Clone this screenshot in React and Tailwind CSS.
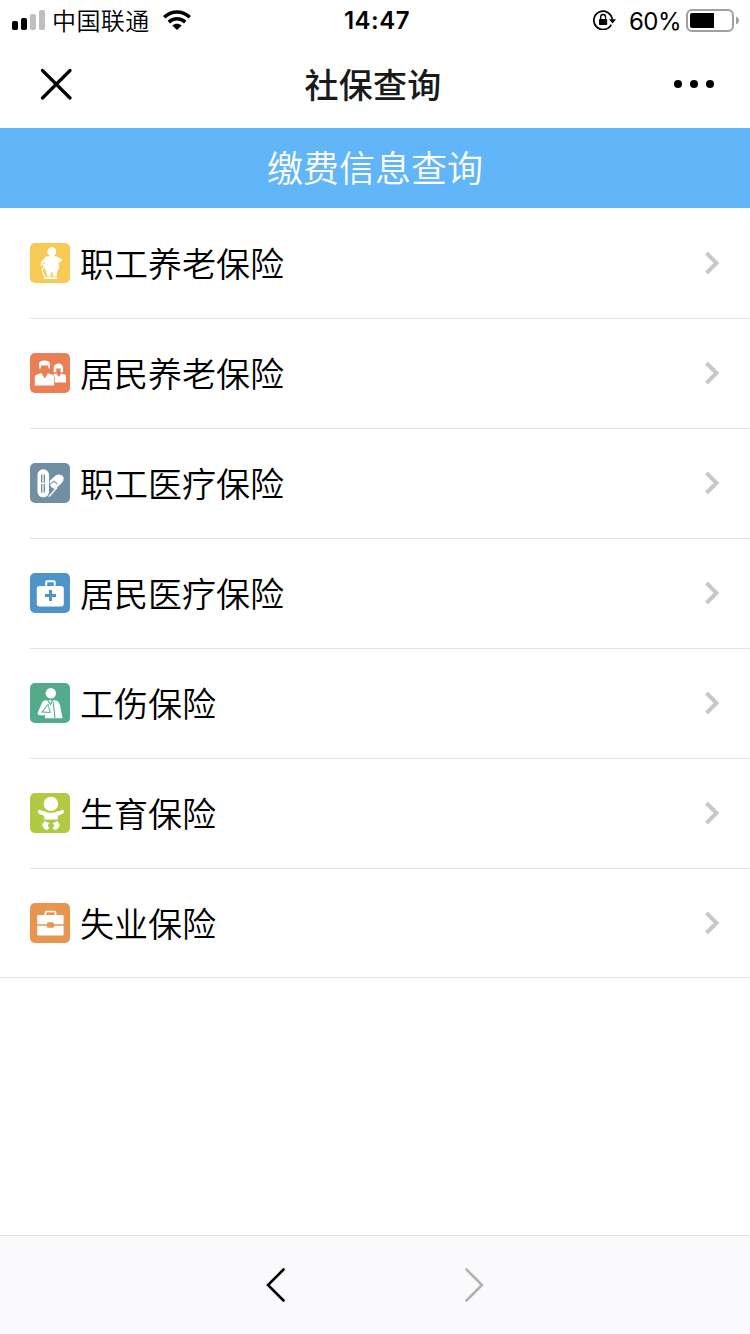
const insurances = [
  { name: "职工养老保险", color: "bg-[#f6ca54]", icon: ElderIcon },
  { name: "居民养老保险", color: "bg-[#ea7e55]", icon: CoupleIcon },
  { name: "职工医疗保险", color: "bg-[#718fa3]", icon: PillsIcon },
  { name: "居民医疗保险", color: "bg-[#4e94cb]", icon: MedkitIcon },
  { name: "工伤保险", color: "bg-[#54ab8b]", icon: InjuryIcon },
  { name: "生育保险", color: "bg-[#b1ca44]", icon: BabyIcon },
  { name: "失业保险", color: "bg-[#e8954f]", icon: BriefcaseIcon }
];

function ElderIcon() {
  return (
    <svg viewBox="0 0 40 40" className="size-10" fill="#fff">
      <circle cx="21.8" cy="8.7" r="4.5" />
      <path d="M15.3 14c3-1.400 9.500-1.400 12.500 0l3.800 2.100c.8.400.8 1.600 0 2L28.600 20c1 3.200.4 6.500-1.500 8.600l-.4 4.900h-3.900v-4h-2v4h-4l-.3-4.900c-2.300-2.300-2.900-6.500-1.800-10.200l-2.700 2.900-1.500-1.500z" />
      <path d="M10.800 22.800c.5-2.100 3.800-2 3.500.3l-2.200 4.300 3.100 7.600" fill="none" stroke="#fff" strokeWidth="1.200" />
      <path d="M14 35.200h13.300" stroke="#fff" strokeWidth="1.700" />
    </svg>
  );
}

function CoupleIcon() {
  return (
    <svg viewBox="0 0 40 40" className="size-10" fill="#fff">
      <path d="M9 15.500V11c0-2.200 2-3.500 5.300-3.500S20 8.800 20 11.200v4.300h-1.400l-.4-3h-6.900l-.6 3z" />
      <path d="M4.800 32.400V24c0-1.200 1-2 2.300-2.400l4.200-1.500 3.400 5.400 3.200-5.300 4 1.500c1.800.700 2.300 1.500 2.300 3.300v7.400z" />
      <path d="M23.700 19.200v-4.400c0-2.600 2-4.300 4.700-4.300s4.700 1.700 4.700 4.300v4.400h-2.600v-3.600h-4.200v3.600z" />
      <path d="M22.500 21.600l3.900-1.200 2.400 3.700 2.500-3.700 3.100 1.200c1.200.4 1.600 1 1.600 2.400v5.400H24.800V25c0-1.500-.8-2.700-2.300-3.400z" />
    </svg>
  );
}

function PillsIcon() {
  return (
    <svg viewBox="0 0 40 40" className="size-10">
      <rect x="7.500" y="6.300" width="11.500" height="28" rx="5.500" fill="#fff" />
      <rect x="11" y="11" width="4" height="19" rx="1.600" fill="#718fa3" />
      <path d="M13 11v19M10.800 20.300h4.400" stroke="#fff" strokeWidth="1.300" />
      <path d="M20.200 17.300l5.500-4.800c2.500-2 6.600-.9 7.700 1.700.7 1.800.2 3.800-1.300 5.300l-5.600 5.400c-1.200 1.200-2.700 1-3.700.4-2.500-1.500-3.800-5.800-2.600-8z" fill="#fff" />
      <path d="M20.300 21.200l3.600-3 3.400 3" fill="none" stroke="#718fa3" strokeWidth="1.100" />
      <path d="M18.800 33.700L27 24.500" stroke="#fff" strokeWidth="1.300" />
    </svg>
  );
}

function MedkitIcon() {
  return (
    <svg viewBox="0 0 40 40" className="size-10">
      <rect x="6.800" y="13" width="27" height="20.500" rx="2.700" fill="#fff" />
      <path d="M16.200 12.800V9.200c0-.7.4-1 1-1h6.500c.7 0 1 .3 1 1v3.600" fill="none" stroke="#fff" strokeWidth="2" />
      <path d="M20.500 16.900v11M15 22.400h11" stroke="#4e94cb" strokeWidth="3" />
    </svg>
  );
}

function InjuryIcon() {
  return (
    <svg viewBox="0 0 40 40" className="size-10">
      <circle cx="20.800" cy="10.200" r="5.200" fill="#fff" />
      <path d="M15.500 17.200h9c3.800 0 5.200 2.900 5.900 7.100l2.200 10.900H15v-3H9.800c-2.100-.1-2.700-1.900-1.600-3.600l3.500-8c.7-2 1.600-3 3.800-3.400z" fill="#fff" />
      <path d="M18.300 20.500l-7.300 9 9.800.5z" fill="#54ab8b" />
      <path d="M18 22.200l-4.900 6.300 6.300.4z" fill="#fff" />
      <path d="M17.500 16.800l3.100 4.700 2-4.700M23.200 18.700l1.800 16.500" fill="none" stroke="#54ab8b" strokeWidth="1.100" />
    </svg>
  );
}

function BabyIcon() {
  return (
    <svg viewBox="0 0 40 40" className="size-10" fill="#fff">
      <circle cx="20.900" cy="10.900" r="7.200" />
      <path d="M8.200 17.600c1-1.200 2.700-.9 3.600.4l2.900.2c3.900 2 8.900 2 12.700 0l2.900-.2c.8-1.300 2.500-1.600 3.300-.4.900 1.300-.2 2.900-1.300 3.500l-4.400 1.700-.3 3.700H14.400l-.3-3.700-4.700-1.700c-1.200-.4-2-2.400-1.200-3.500z" />
      <path d="M14.600 28l4.700 2.300-1.800 2.200 1.100 1.300c1.200 1.500-.5 3.500-2.400 2.900l-2-.9-2.200-4z" />
      <path d="M27.400 28l-4.700 2.300 1.800 2.200-1.100 1.300c-1.200 1.500.5 3.500 2.400 2.900l2-.9 2.200-4z" />
    </svg>
  );
}

function BriefcaseIcon() {
  return (
    <svg viewBox="0 0 40 40" className="size-10">
      <path d="M15.500 13V9.700c0-.8.400-1.200 1.200-1.200h7.600c.8 0 1.200.4 1.200 1.200V13" fill="none" stroke="#fff" strokeWidth="1.700" />
      <rect x="7.200" y="12" width="26.400" height="20.500" rx="1.300" fill="#fff" />
      <path d="M7 22h27" stroke="#e8954f" strokeWidth="1.600" />
      <rect x="16.900" y="19.200" width="7.200" height="5.500" rx="1.500" fill="#e8954f" />
    </svg>
  );
}

function StatusBar() {
  return (
    <div className="grid h-10 grid-cols-[1fr_auto_1fr] items-center pr-[11px] pl-3 text-black">
      <div className="flex items-center">
        <svg viewBox="0 0 33 20" className="h-5 w-[33px]">
          <rect y="11" width="6" height="9" rx="1.800" />
          <rect x="9" y="8" width="6" height="12" rx="1.800" />
          <rect x="18" y="4" width="6" height="16" rx="1.800" fill="#bfbfbf" />
          <rect x="27" width="6" height="20" rx="1.800" fill="#bfbfbf" />
        </svg>
        <span className="ml-[7px] text-[24px] leading-10 font-[350] tracking-[0.4px]">中国联通</span>
        <svg viewBox="0 0 28 20" className="ml-[13px] h-5 w-7 shrink-0" fill="none" stroke="#000" strokeWidth="3.500">
          <path d="M1.200 7.300C8.600.2 19.400.2 26.800 7.300" />
          <path d="M5.800 12.100c4.800-4.400 11.600-4.400 16.400 0" />
          <path d="M9.300 15.500c2.800-2.400 6.600-2.400 9.400 0L14 20z" fill="#000" stroke="none" />
        </svg>
      </div>
      <span className="pt-0.5 pl-[3px] font-[Inter] text-[24px] font-semibold tracking-[0.500px]">14:47</span>
      <div className="flex items-center justify-end">
        <svg viewBox="0 0 24 20" className="h-5 w-6">
          <path d="M18.200 14.600A9.200 9.200 0 1 1 19.200 9.500" fill="none" stroke="#000" strokeWidth="1.700" />
          <path d="M16 9.300h7l-3.500 4.200z" />
          <rect x="6" y="9" width="8.200" height="6" rx=".7" />
          <path d="M7.700 9V6.900a2.400 2.400 0 0 1 4.800 0V9" fill="none" stroke="#000" strokeWidth="1.300" />
        </svg>
        <span className="ml-3 pt-[3px] font-[Inter] text-[24px] tracking-[-0.500px]">60%</span>
        <svg viewBox="0 0 53 24" className="ml-[5px] h-6 w-[53px] shrink-0">
          <rect x="1" y="2" width="46" height="21" rx="5" fill="none" stroke="#a0a0a0" strokeWidth="2" />
          <path d="M6 5h22v15H6a2 2 0 0 1-2-2V7a2 2 0 0 1 2-2z" />
          <path d="M50 8.500c4 1.500 4 6.500 0 8z" fill="#a0a0a0" />
        </svg>
      </div>
    </div>
  );
}

function NavBar() {
  return (
    <header className="grid h-[88px] grid-cols-[1fr_auto_1fr] items-center pr-9 pl-10">
      <svg viewBox="0 0 32 32" className="size-8" stroke="#000" strokeWidth="3.200" strokeLinecap="round">
        <path d="M2.500 2.500l27.500 27.500M30 2.500L2.500 30" />
      </svg>
      <h1 className="pr-2 pb-px text-[34px] leading-[50px] font-medium tracking-[0.300px] text-[#1a1a1a]">社保查询</h1>
      <svg viewBox="0 0 40 8" className="h-2 w-10 justify-self-end">
        <circle cx="4" cy="4" r="4" />
        <circle cx="20" cy="4" r="4" />
        <circle cx="36" cy="4" r="4" />
      </svg>
    </header>
  );
}

function InsuranceItem({ item, first }) {
  const Icon = item.icon;

  return (
    <li className={first ? "flex h-[110px] items-center pr-[30px]" : "flex h-[110px] items-center border-t border-[#e3e3e3] pr-[30px] pb-px"}>
      <span className={`size-10 overflow-hidden rounded-[5px] ${item.color}`}>
        <Icon />
      </span>
      <span className="ml-2.5 flex-1 text-[34px] leading-[50px] font-[350] text-black">{item.name}</span>
      <svg viewBox="0 0 16 24" className="h-6 w-4" fill="none" stroke="#c7c7cc" strokeWidth="4">
        <path d="M2.500 2l10 10-10 10" />
      </svg>
    </li>
  );
}

export default function App() {
  return (
    <div className="flex h-[1334px] w-[750px] flex-col overflow-hidden bg-white font-['Noto_Sans_CJK_SC',sans-serif]">
      <StatusBar />
      <NavBar />
      <h2 className="h-20 bg-[#61b5f9] text-center text-[36px] leading-[76px] font-[350] text-white">缴费信息查询</h2>
      <ul className="h-[770px] border-b border-[#e3e3e3] pl-[30px]">
        {insurances.map((item, index) => (
          <InsuranceItem key={item.name} item={item} first={index === 0} />
        ))}
      </ul>
      <footer className="mt-auto flex h-[99px] items-center justify-center gap-[178px] border-t border-[#e3e3e5] bg-[#fafafc]">
        <svg viewBox="0 0 20 34" className="h-[34px] w-5" fill="none" stroke="#000" strokeWidth="2.600" strokeLinecap="round">
          <path d="M17.500 1.500L2 17l15.500 15.500" />
        </svg>
        <svg viewBox="0 0 20 34" className="h-[34px] w-5" fill="none" stroke="#b2b2b2" strokeWidth="2.600" strokeLinecap="round">
          <path d="M2.500 1.500L18 17 2.500 32.500" />
        </svg>
      </footer>
    </div>
  );
}
